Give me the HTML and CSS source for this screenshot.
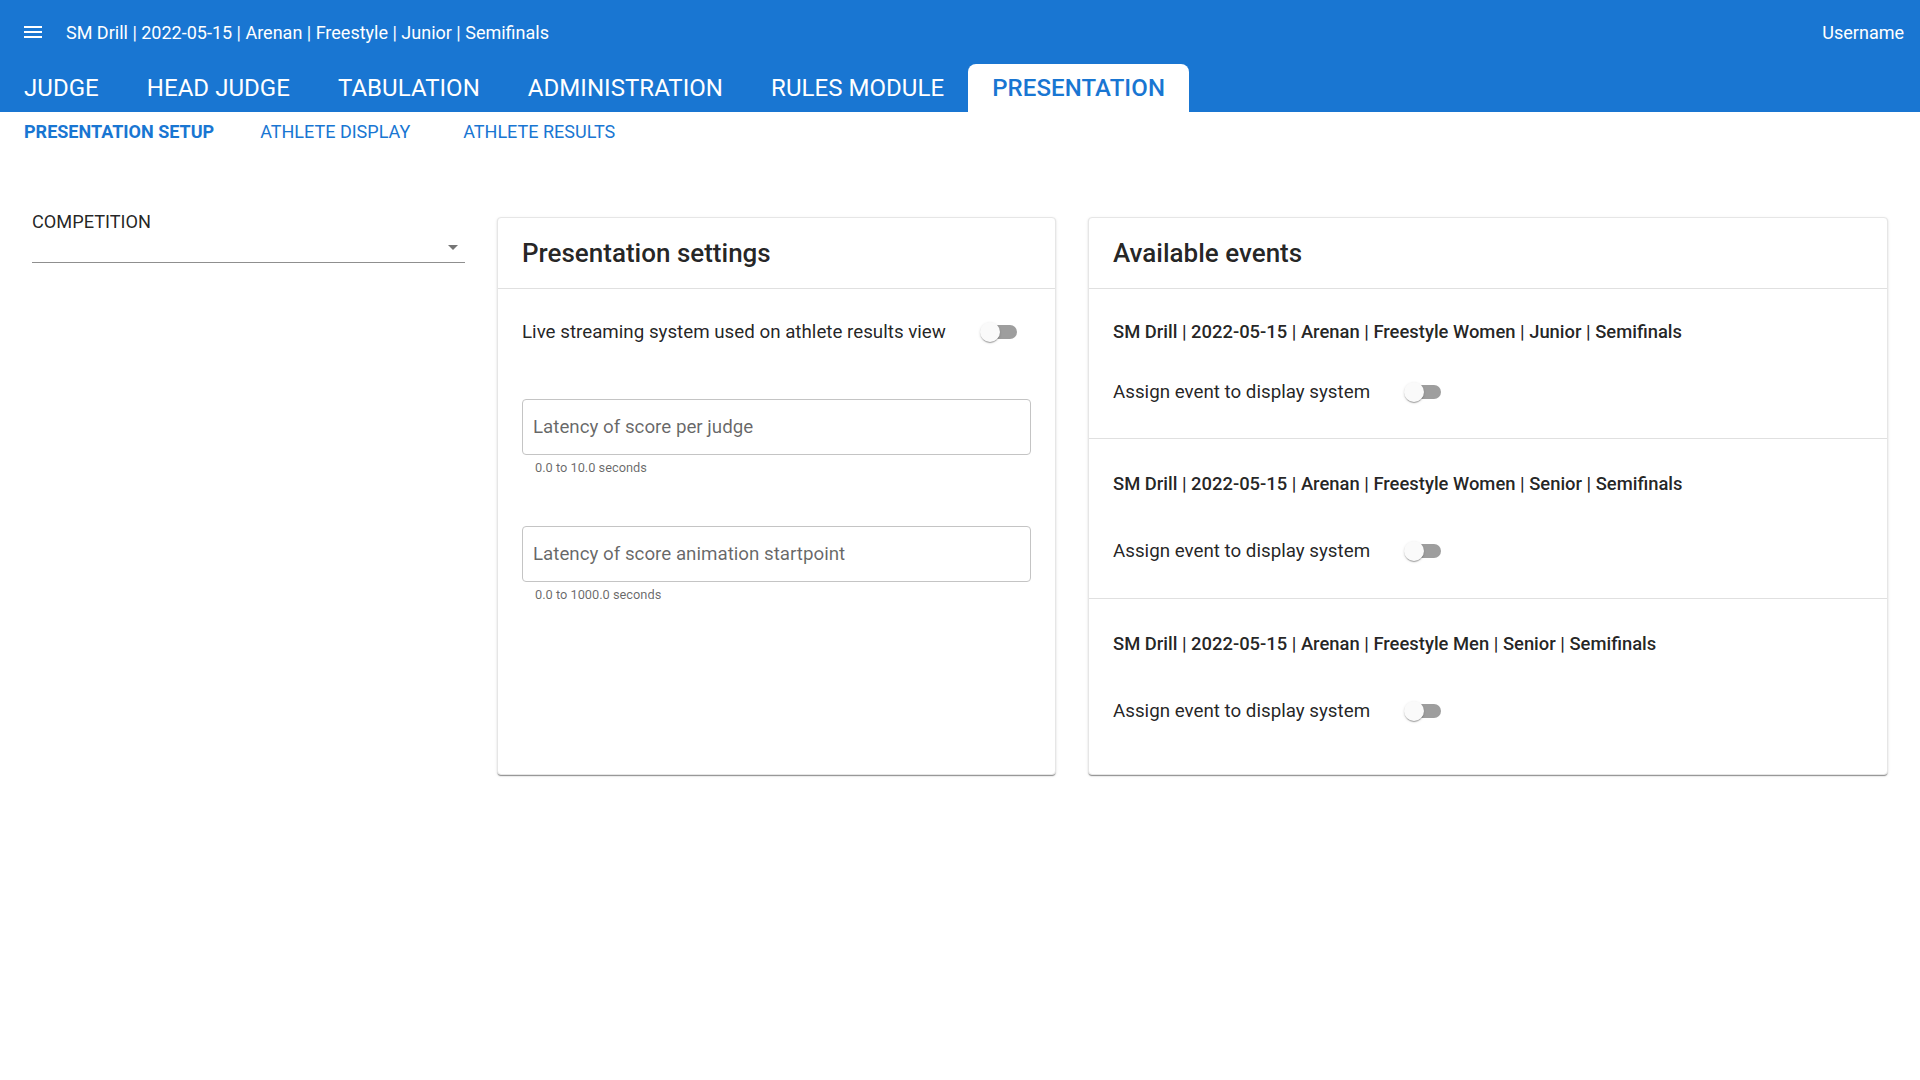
FILE: index.html
```html
<!DOCTYPE html>
<html lang="en">
<head>
<meta charset="utf-8">
<title>Presentation setup</title>
<link rel="stylesheet" href="styles.css">
</head>
<body>
<header class="appbar">
  <div class="toolbar">
    <svg class="menu-icon" viewBox="0 0 24 24" width="24" height="24"><path d="M3 18h18v-2H3v2zm0-5h18v-2H3v2zm0-7v2h18V6H3z" fill="#fff"/></svg>
    <span class="app-title">SM Drill | 2022-05-15 | Arenan | Freestyle | Junior | Semifinals</span>
    <span class="username">Username</span>
  </div>
  <nav class="tabs">
    <span class="tab">JUDGE</span>
    <span class="tab">HEAD JUDGE</span>
    <span class="tab">TABULATION</span>
    <span class="tab">ADMINISTRATION</span>
    <span class="tab">RULES MODULE</span>
    <span class="tab tab-active">PRESENTATION</span>
  </nav>
</header>
<nav class="subnav">
  <span class="subtab subtab-active">PRESENTATION SETUP</span>
  <span class="subtab">ATHLETE DISPLAY</span>
  <span class="subtab subtab-wide">ATHLETE RESULTS</span>
</nav>
<main class="content">
  <section class="filter">
    <div class="filter-label">COMPETITION</div>
    <div class="select">
      <svg class="select-arrow" viewBox="0 0 24 24" width="24" height="24"><path d="M7 10l5 5 5-5z" fill="#757575"/></svg>
    </div>
  </section>

  <section class="card">
    <div class="card-head">Presentation settings</div>
    <div class="card-body">
      <div class="toggle-row">
        <span>Live streaming system used on athlete results view</span>
        <span class="switch"><span class="track"></span><span class="thumb"></span></span>
      </div>
      <div class="field">
        <div class="input">Latency of score per judge</div>
        <div class="helper">0.0 to 10.0 seconds</div>
      </div>
      <div class="field field-second">
        <div class="input">Latency of score animation startpoint</div>
        <div class="helper">0.0 to 1000.0 seconds</div>
      </div>
    </div>
  </section>

  <section class="card">
    <div class="card-head">Available events</div>
    <div class="event">
      <div class="event-title">SM Drill | 2022-05-15 | Arenan | Freestyle Women | Junior | Semifinals</div>
      <div class="toggle-row assign">
        <span>Assign event to display system</span>
        <span class="switch"><span class="track"></span><span class="thumb"></span></span>
      </div>
    </div>
    <div class="event">
      <div class="event-title">SM Drill | 2022-05-15 | Arenan | Freestyle Women | Senior | Semifinals</div>
      <div class="toggle-row assign">
        <span>Assign event to display system</span>
        <span class="switch"><span class="track"></span><span class="thumb"></span></span>
      </div>
    </div>
    <div class="event">
      <div class="event-title">SM Drill | 2022-05-15 | Arenan | Freestyle Men | Senior | Semifinals</div>
      <div class="toggle-row assign">
        <span>Assign event to display system</span>
        <span class="switch"><span class="track"></span><span class="thumb"></span></span>
      </div>
    </div>
  </section>
</main>
</body>
</html>
```
FILE: styles.css
```css
* { box-sizing: border-box; }
html, body { margin: 0; padding: 0; background: #fff; }
body {
  font-family: Roboto, "Noto Sans", "Liberation Sans", sans-serif;
  color: rgba(0, 0, 0, 0.87);
  width: 1920px;
  height: 1080px;
  overflow: hidden;
}

.appbar { background: #1976d2; color: #fff; }

.toolbar {
  height: 64px;
  display: flex;
  align-items: center;
  padding: 0 16px 0 21px;
}
.menu-icon { display: block; flex: none; }
.app-title { margin-left: 21px; font-size: 18px; }
.username { margin-left: auto; font-size: 18px; }

.tabs { display: flex; height: 48px; }
.tab {
  padding: 0 24px;
  font-size: 24px;
  line-height: 48px;
  color: #fff;
  letter-spacing: 0.05px;
}
.tab-active {
  background: #fff;
  color: #1976d2;
  font-weight: 500;
  border-radius: 8px 8px 0 0;
  padding: 0 24px 0 24px;
  letter-spacing: 0.1px;
}

.subnav { display: flex; height: 38px; align-items: center; }
.subtab {
  padding: 0 23px 0 24px;
  font-size: 18px;
  color: #1976d2;
}
.subtab-active { font-weight: 700; padding-right: 22px; }
.subtab-wide { padding-left: 30px; }

.content {
  display: grid;
  grid-template-columns: 433px 559px 800px;
  column-gap: 32px;
  padding: 63px 32px 0;
  align-items: start;
}

.filter-label { font-size: 18.2px; line-height: 18px; }
.select {
  height: 32px;
  border-bottom: 1px solid #8f8f8f;
  display: flex;
  align-items: center;
  justify-content: flex-end;
}
.select-arrow { display: block; margin-top: 1px; }

.card {
  margin-top: 4px;
  height: 558px;
  border: 1px solid #e6e6e6;
  border-radius: 4px;
  box-shadow: 0 2px 1px -1px rgba(0, 0, 0, 0.3), 0 1px 1px 0 rgba(0, 0, 0, 0.14), 0 1px 3px 0 rgba(0, 0, 0, 0.1);
  background: #fff;
}
.card-head {
  height: 71px;
  border-bottom: 1px solid #e0e0e0;
  padding: 0 24px;
  display: flex;
  align-items: center;
  font-size: 26px;
  font-weight: 500;
}
.card-body { padding: 27px 24px 0; }

.toggle-row {
  display: flex;
  align-items: center;
  height: 32px;
  font-size: 18.75px;
}
.switch {
  position: relative;
  width: 37px;
  height: 20px;
  margin-left: 34px;
  flex: none;
}
.track {
  position: absolute;
  left: 3px;
  top: 3px;
  width: 34px;
  height: 14px;
  border-radius: 7px;
  background: #9e9e9e;
}
.thumb {
  position: absolute;
  left: 0;
  top: 0;
  width: 20px;
  height: 20px;
  border-radius: 50%;
  background: #fafafa;
  box-shadow: 0 2px 1px -1px rgba(0, 0, 0, 0.2), 0 1px 1px 0 rgba(0, 0, 0, 0.14), 0 1px 3px 0 rgba(0, 0, 0, 0.12);
}

.field { margin-top: 51px; }
.field-second { margin-top: 50px; }
.input {
  height: 56px;
  border: 1px solid #c4c4c4;
  border-radius: 4px;
  padding: 0 10px;
  display: flex;
  align-items: center;
  font-size: 18.75px;
  color: rgba(0, 0, 0, 0.6);
}
.helper {
  margin-top: 5px;
  padding-left: 13px;
  font-size: 12.8px;
  line-height: 16px;
  color: rgba(0, 0, 0, 0.6);
}

.event {
  padding: 31px 24px 30px;
  border-bottom: 1px solid #e0e0e0;
}
.event:last-child { border-bottom: none; }
.event + .event { padding-top: 33px; padding-bottom: 31px; }
.event-title { font-size: 18.4px; line-height: 24px; font-weight: 500; }
.assign { margin-top: 32px; }
.event + .event .assign { margin-top: 39px; }
```
